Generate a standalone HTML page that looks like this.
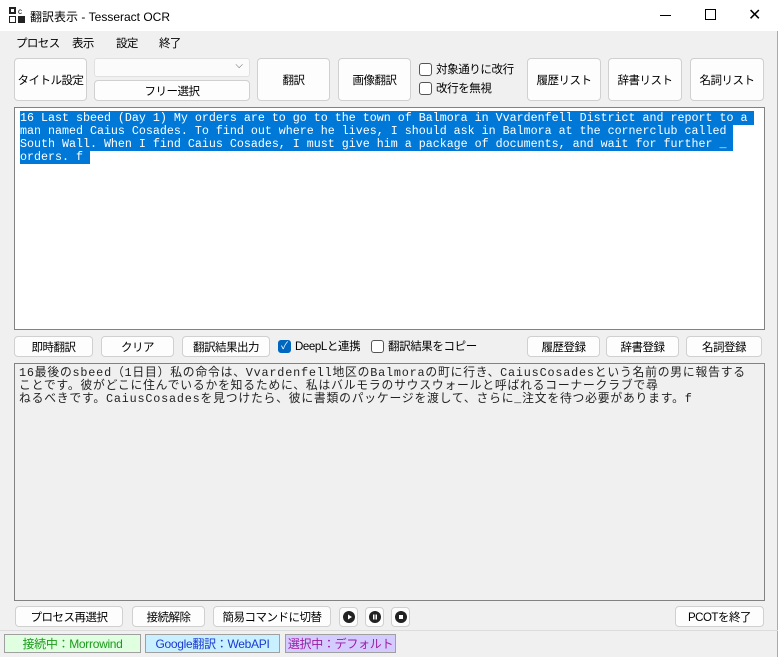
<!DOCTYPE html>
<html><head><meta charset="utf-8"><style>
*{box-sizing:border-box;margin:0;padding:0}
body{width:780px;height:657px;background:#fff;font-family:"Liberation Sans","Noto Sans CJK JP",sans-serif;font-size:12px;color:#000;position:relative;overflow:hidden}
.win{position:absolute;left:0;top:0;width:778px;height:657px;background:#f0f0f0;border-right:1px solid #aaa}
.title{position:absolute;left:0;top:0;width:778px;height:31px;background:#fff}
.abs{position:absolute}
.btn{position:absolute;background:#fdfdfd;border:1px solid #d0d0d0;border-radius:4px;display:flex;align-items:center;justify-content:center;font-size:11.5px;letter-spacing:-0.5px;white-space:nowrap}
.cb{position:absolute;width:13px;height:13px;border:1px solid #555;border-radius:3px;background:#fff}
.lbl{position:absolute;font-size:11.5px;letter-spacing:-0.4px;white-space:nowrap}
.menu span{position:absolute;top:35px;font-size:11.5px;letter-spacing:-0.6px}
.ta{position:absolute;border:1px solid #828282}
.mono{font-family:"Liberation Mono","Noto Sans CJK JP",monospace;font-size:11.67px;line-height:13px;white-space:pre}
.sel span{background:#0078d7;color:#fff}
.jp{font-family:"Liberation Mono","Noto Sans CJK JP",monospace;font-size:11.8px;letter-spacing:0.8px;line-height:13px;white-space:pre;color:#222}
.ic{position:absolute;top:607px;width:19px;height:20px;background:#fdfdfd;border:1px solid #d0d0d0;border-radius:4px}
.ic i{position:absolute;left:3px;top:3px;width:12px;height:12px;border-radius:50%;background:#222}
.st{position:absolute;top:634px;height:19px;font-size:12px;letter-spacing:-0.3px;display:flex;align-items:center;justify-content:center;border:1px solid #a0a0a0}
</style></head><body>
<div class="win">
<div class="title">
 <svg class="abs" style="left:9px;top:7px" width="16" height="16"><rect x="0" y="0" width="7" height="7" fill="#222"/><rect x="2" y="2" width="3" height="3" fill="#fff"/><text x="9" y="7" font-size="8" font-family="Liberation Sans">c</text><rect x="0.5" y="9.5" width="6" height="6" fill="#fff" stroke="#222"/><rect x="9" y="9" width="7" height="7" fill="#222"/></svg>
 <span class="abs" style="left:30px;top:8px;font-size:12px">翻訳表示 - Tesseract OCR</span>
 <div class="abs" style="left:660px;top:15px;width:11px;height:1px;background:#000"></div>
 <div class="abs" style="left:705px;top:9px;width:11px;height:11px;border:1px solid #000"></div>
 <span class="abs" style="left:748px;top:5px;font-size:16px">✕</span>
</div>
<div class="menu"><span style="left:16px">プロセス</span><span style="left:72px">表示</span><span style="left:116px">設定</span><span style="left:159px">終了</span></div>

<div class="btn" style="left:14px;top:58px;width:73px;height:43px">タイトル設定</div>
<div class="abs" style="left:94px;top:58px;width:156px;height:19px;background:#fbfbfb;border:1px solid #e0e0e0;border-radius:3px"><span class="abs" style="right:6px;top:1px;font-size:10px;color:#555">⌵</span></div>
<div class="btn" style="left:94px;top:80px;width:156px;height:21px">フリー選択</div>
<div class="btn" style="left:257px;top:58px;width:73px;height:43px">翻訳</div>
<div class="btn" style="left:338px;top:58px;width:73px;height:43px">画像翻訳</div>
<div class="cb" style="left:419px;top:63px"></div><span class="lbl" style="left:436px;top:61px">対象通りに改行</span>
<div class="cb" style="left:419px;top:82px"></div><span class="lbl" style="left:436px;top:80px">改行を無視</span>
<div class="btn" style="left:527px;top:58px;width:74px;height:43px">履歴リスト</div>
<div class="btn" style="left:608px;top:58px;width:74px;height:43px">辞書リスト</div>
<div class="btn" style="left:690px;top:58px;width:74px;height:43px">名詞リスト</div>

<div class="ta" style="left:14px;top:107px;width:751px;height:223px;background:#fff">
<div class="mono sel abs" style="left:5px;top:4px"><span>16 Last sbeed (Day 1) My orders are to go to the town of Balmora in Vvardenfell District and report to a </span>
<span>man named Caius Cosades. To find out where he lives, I should ask in Balmora at the cornerclub called </span>
<span>South Wall. When I find Caius Cosades, I must give him a package of documents, and wait for further _ </span>
<span>orders. f </span></div>
</div>

<div class="btn" style="left:14px;top:336px;width:79px;height:21px">即時翻訳</div>
<div class="btn" style="left:101px;top:336px;width:73px;height:21px">クリア</div>
<div class="btn" style="left:182px;top:336px;width:88px;height:21px">翻訳結果出力</div>
<div class="cb" style="left:278px;top:340px;background:#0067c0;border-color:#0067c0;color:#fff;font-size:10px;line-height:11px;text-align:center">✓</div><span class="lbl" style="left:295px;top:338px">DeepLと連携</span>
<div class="cb" style="left:371px;top:340px"></div><span class="lbl" style="left:388px;top:338px">翻訳結果をコピー</span>
<div class="btn" style="left:527px;top:336px;width:73px;height:21px">履歴登録</div>
<div class="btn" style="left:606px;top:336px;width:73px;height:21px">辞書登録</div>
<div class="btn" style="left:686px;top:336px;width:76px;height:21px">名詞登録</div>

<div class="ta" style="left:14px;top:363px;width:751px;height:238px;background:#f0f0f0">
<div class="jp abs" style="left:4px;top:3px">16最後のsbeed（1日目）私の命令は、Vvardenfell地区のBalmoraの町に行き、CaiusCosadesという名前の男に報告する
ことです。彼がどこに住んでいるかを知るために、私はバルモラのサウスウォールと呼ばれるコーナークラブで尋
ねるべきです。CaiusCosadesを見つけたら、彼に書類のパッケージを渡して、さらに_注文を待つ必要があります。f</div>
</div>

<div class="btn" style="left:15px;top:606px;width:108px;height:21px">プロセス再選択</div>
<div class="btn" style="left:132px;top:606px;width:73px;height:21px">接続解除</div>
<div class="btn" style="left:213px;top:606px;width:118px;height:21px">簡易コマンドに切替</div>
<div class="ic" style="left:339px"><i></i><svg class="abs" style="left:3px;top:3px" width="12" height="12"><path d="M5 3.5L9 6L5 8.5Z" fill="#fff"/></svg></div>
<div class="ic" style="left:365px"><i></i><svg class="abs" style="left:3px;top:3px" width="12" height="12"><rect x="4" y="3.5" width="1.5" height="5" fill="#fff"/><rect x="6.5" y="3.5" width="1.5" height="5" fill="#fff"/></svg></div>
<div class="ic" style="left:391px"><i></i><svg class="abs" style="left:3px;top:3px" width="12" height="12"><rect x="4" y="4" width="4" height="4" fill="#fff"/></svg></div>
<div class="btn" style="left:675px;top:606px;width:89px;height:21px">PCOTを終了</div>

<div class="abs" style="left:0;top:630px;width:778px;height:1px;background:#dcdcdc"></div>
<div class="st" style="left:4px;width:137px;background:#e0ffe0;color:#1a9a1a">接続中：Morrowind</div>
<div class="st" style="left:145px;width:135px;background:#c8f0ff;color:#1a3ad0">Google翻訳：WebAPI</div>
<div class="st" style="left:285px;width:111px;background:#d4ccff;color:#9a1aa0">選択中：デフォルト</div>
</div>
</body></html>
